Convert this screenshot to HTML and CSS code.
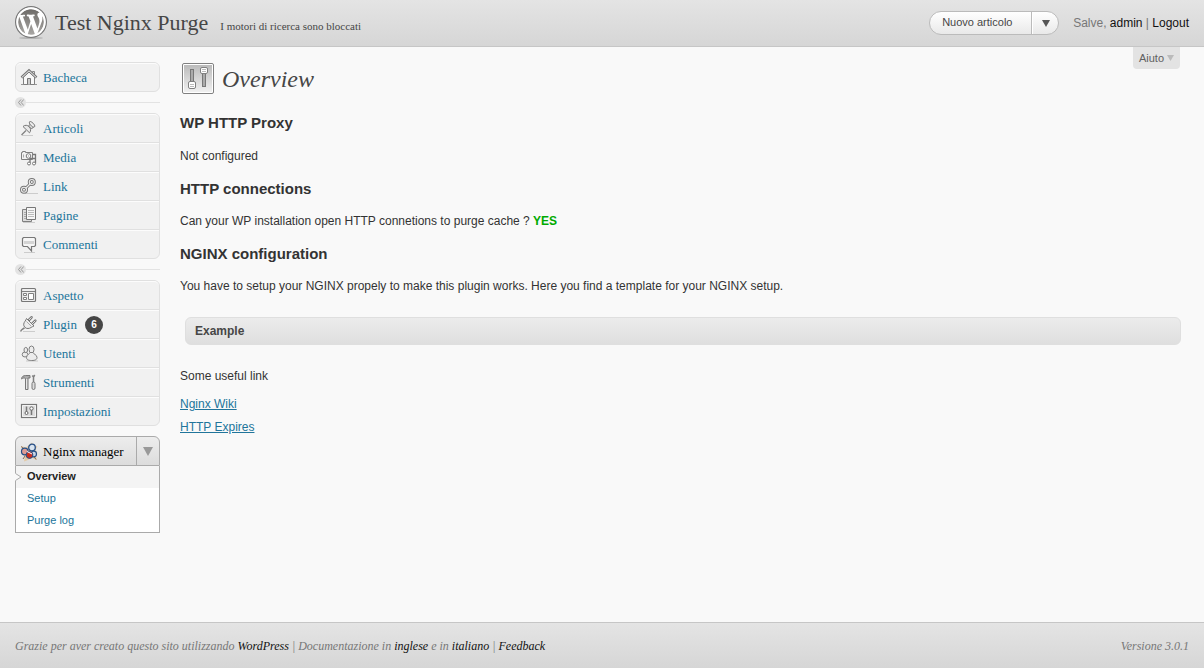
FILE: index.html
```html
<!DOCTYPE html>
<html lang="it">
<head>
<meta charset="utf-8">
<meta name="viewport" content="width=device-width, initial-scale=1">
<title>Overview ‹ Test Nginx Purge — WordPress</title>
<link rel="stylesheet" href="styles.css">
</head>
<body>
<header class="topbar">
  <svg class="logo" viewBox="0 0 32 34" aria-hidden="true">
    <defs><linearGradient id="disc" x1="0" y1="0" x2="0" y2="1"><stop offset="0" stop-color="#6e6b68"/><stop offset="1" stop-color="#a9a7a4"/></linearGradient></defs>
    <ellipse cx="16" cy="32" rx="12" ry="1" fill="#b4b4b4"/>
    <circle cx="16" cy="16" r="15.4" fill="#fff" stroke="#777" stroke-width="1.2"/>
    <circle cx="16" cy="16" r="13" fill="url(#disc)"/>
    <path transform="translate(1.6 1.6) scale(1.44)" fill="#fff" d="M20 10c0-5.51-4.49-10-10-10C4.48 0 0 4.49 0 10c0 5.52 4.48 10 10 10 5.51 0 10-4.48 10-10zM7.78 15.37L4.37 6.22c.55-.02 1.17-.08 1.17-.08.5-.06.44-1.13-.06-1.11 0 0-1.45.11-2.37.11-.18 0-.37 0-.58-.01C4.12 2.69 6.87 1.11 10 1.11c2.33 0 4.45.87 6.05 2.34-.68-.11-1.65.39-1.65 1.58 0 .74.45 1.36.9 2.1.35.61.55 1.36.55 2.46 0 1.49-1.4 5-1.4 5l-3.03-8.37c.54-.02.82-.17.82-.17.5-.05.44-1.25-.06-1.22 0 0-1.44.12-2.38.12-.87 0-2.33-.12-2.33-.12-.5-.03-.56 1.2-.06 1.22l.92.08 1.26 3.41zM17.41 10c.24-.64.74-1.87.43-4.25.7 1.29 1.05 2.71 1.05 4.25 0 3.29-1.73 6.24-4.4 7.78.97-2.59 1.94-5.2 2.92-7.78zM6.1 18.09C3.12 16.65 1.11 13.53 1.11 10c0-1.3.23-2.48.72-3.59C3.25 10.3 4.67 14.2 6.1 18.09zm4.03-6.63l2.58 6.98c-.86.29-1.76.45-2.71.45-.79 0-1.57-.11-2.29-.33.81-2.38 1.62-4.74 2.42-7.1z"/>
  </svg>
  <div class="site">
    <h1 class="site-title"><a href="#">Test Nginx Purge</a></h1>
    <a class="privacy" href="#">I motori di ricerca sono bloccati</a>
  </div>
  <div class="favorite">
    <a class="favorite-link" href="#">Nuovo articolo</a>
    <button class="favorite-toggle" type="button" aria-label="Altre azioni"><svg width="8" height="7" viewBox="0 0 8 7"><path d="M0 0h8L4 7z" fill="#555"/></svg></button>
  </div>
  <p class="user">Salve, <a href="#">admin</a> | <a href="#">Logout</a></p>
</header>

<div class="page">
  <nav class="sidebar" aria-label="Menu">
    <ul class="menu">
      <li><a href="#"><svg class="icon" viewBox="0 0 18 18"><path d="M1 15.500h16" stroke="#999"/><path d="M12.500 6V2.500h2V8" fill="#eee" stroke="#888"/><path d="M3.500 8v7.500h11V8L9 3z" fill="#f8f8f8" stroke="#808080"/><path d="M1.500 8.500 9 1.500l7.500 7" fill="none" stroke="#777" stroke-width="2.600"/><path d="M2 8.300 9 1.800l7 6.500" fill="none" stroke="#f4f4f4" stroke-width="1"/><path d="M7.500 15.500V9.500h3v6" fill="#ccc" stroke="#777"/></svg>Bacheca</a></li>
    </ul>
    <div class="separator"><button type="button" aria-label="Comprimi menu"><svg width="6" height="7" viewBox="0 0 6 7"><path d="M3 .5l-2.500 3 2.500 3M5.700.5l-2.500 3 2.500 3" fill="none" stroke="#999"/></svg></button></div>
    <ul class="menu">
      <li><a href="#"><svg class="icon" viewBox="0 0 18 18"><path d="M2 15.500h11" stroke="#ccc"/><path d="M6 10.500 1.500 15" stroke="#808080" stroke-width="1.300"/><path d="M8.500 6 11.500 3l3 3L11.500 9z" fill="#ddd" stroke="#777"/><path d="M9.500 1.800c1-1.600 6.600 3.500 5 5-1 .7-2.200.1-3.200-1S8.800 3.300 9.500 1.800z" fill="#eee" stroke="#777"/><path d="M3 6.500c2-1.800 4.500-1.500 6.200.3s2 4 .3 6z" fill="#e8e8e8" stroke="#777"/></svg>Articoli</a></li>
      <li><a href="#"><svg class="icon" viewBox="0 0 18 18"><path d="M1.500 3.500h1v-1h3v1h7v7h-11z" fill="#f2f2f2" stroke="#808080"/><circle cx="8.500" cy="7" r="2.300" fill="#fff" stroke="#777"/><circle cx="8.500" cy="7" r=".8" fill="#aaa"/><path d="M3.500 5.500v3" stroke="#aaa"/><path d="M10 14V9.500h5.500v5M13 5.500h2.500v4" fill="none" stroke="#777" stroke-width="1.300"/><circle cx="9" cy="14.500" r="1.500" fill="#fff" stroke="#777"/><circle cx="14" cy="14.500" r="1.500" fill="#fff" stroke="#777"/></svg>Media</a></li>
      <li><a href="#"><svg class="icon" viewBox="0 0 18 18"><path d="M5 15.500h13" stroke="#ccc"/><g fill="none" stroke="#777" stroke-width="3"><circle cx="11.800" cy="4" r="2.500"/><circle cx="4" cy="11.800" r="2.500"/><path d="M5.500 10.500l5-5"/></g><g fill="none" stroke="#ececec" stroke-width="1.100"><circle cx="11.800" cy="4" r="2.500"/><circle cx="4" cy="11.800" r="2.500"/><path d="M5.500 10.500l5-5"/></g></svg>Link</a></li>
      <li><a href="#"><svg class="icon" viewBox="0 0 18 18"><path d="M3 15.500h12" stroke="#ccc"/><path d="M2.500 2.500h9v12h-9z" fill="#ddd" stroke="#808080"/><path d="M4 5.500h2M4 7.500h2M4 9.500h2M4 11.500h2" stroke="#aaa"/><path d="M6.500.5h9v12h-9z" fill="#f6f6f6" stroke="#777"/><path d="M8 3.500h6M8 5.500h6M8 7.500h6M8 9.500h6" stroke="#bbb"/></svg>Pagine</a></li>
      <li><a href="#"><svg class="icon" viewBox="0 0 18 18"><path d="M4 16.500h11" stroke="#ccc"/><path d="M3.500 1.500h11l1 1v7l-1 1H11.500v4.500L7.500 10.500h-4l-1-1v-7z" fill="#f6f6f6" stroke="#777" stroke-width="1.200"/><path d="M4 5h10v3H4z" fill="#d4d4d4"/></svg>Commenti</a></li>
    </ul>
    <div class="separator"><button type="button" aria-label="Comprimi menu"><svg width="6" height="7" viewBox="0 0 6 7"><path d="M3 .5l-2.500 3 2.500 3M5.700.5l-2.500 3 2.500 3" fill="none" stroke="#999"/></svg></button></div>
    <ul class="menu">
      <li><a href="#"><svg class="icon" viewBox="0 0 18 18"><rect x="1.500" y="1.500" width="14" height="13" rx="1" fill="#eee" stroke="#777" stroke-width="1.200"/><path d="M2 4.500h13" stroke="#808080"/><path d="M3.500 6.500h3v2h-3zM3.500 10.500h3v2h-3zM8.500 6.500h5v6h-5z" fill="#fff" stroke="#808080"/></svg>Aspetto</a></li>
      <li><a href="#"><svg class="icon" viewBox="0 0 18 18"><path d="M3 15.500h12" stroke="#ccc"/><path d="M.8 15.500c0-2 2-2 3.700-3.700" fill="none" stroke="#808080" stroke-width="1.600"/><path d="M8.500 4.500 11.500 1.300M12 8l3.300-3.300" stroke="#777" stroke-width="2.600" stroke-linecap="round"/><path d="M8.500 4.500 11.500 1.300M12 8l3.300-3.300" stroke="#f4f4f4" stroke-width=".9"/><path d="M6.500 2.500 14 10c-2 .5-3.500 2.500-6 2.500-2.500.2-4.500-2-4.300-4.300C3.900 6 6 4.500 6.500 2.500z" fill="#ececec" stroke="#777"/><path d="M6.500 5.500l4.800 4.800" stroke="#aaa"/></svg>Plugin <span class="badge">6</span></a></li>
      <li><a href="#"><svg class="icon" viewBox="0 0 18 18"><path d="M6 16h12" stroke="#ccc"/><g fill="#ececec" stroke="#808080"><ellipse cx="5" cy="9.500" rx="2.800" ry="2.500"/><ellipse cx="5.800" cy="5" rx="1.800" ry="2.600"/><ellipse cx="11.500" cy="4.500" rx="2.500" ry="3.500"/><path d="M10 7.500h3c0 1.500 4 2 4 5 0 2-1.500 3-5.300 3S6.500 14.500 6.500 12.500c0-3 3.500-3.500 3.500-5z"/></g></svg>Utenti</a></li>
      <li><a href="#"><svg class="icon" viewBox="0 0 18 18"><path d="M1.500 4.500c.5-2 2-3 4-3h4.500V4H8v11.500H5.500V4.500c-1.500-.8-2.500-.5-4 .5z" fill="#aaa" stroke="#777"/><path d="M6.700 5v10" stroke="#f4f4f4"/><path d="M13.500 9V3l-1.200-1.500M13.500 3l1.200-2" fill="none" stroke="#808080" stroke-width="1.500"/><rect x="12" y="8" width="3" height="7.500" rx="1.500" fill="#ddd" stroke="#777"/></svg>Strumenti</a></li>
      <li><a href="#"><svg class="icon" viewBox="0 0 18 18"><rect x="1.500" y="1.500" width="15" height="13" fill="#fff" stroke="#777" stroke-width="1.200"/><path d="M3 3h12v10H3z" fill="#ddd"/><path d="M6.500 3.500V9M11.500 6v6" stroke="#777" stroke-width="1.500"/><circle cx="6.500" cy="10" r="1.500" fill="#fff" stroke="#666"/><circle cx="11.500" cy="5.500" r="1.700" fill="#fff" stroke="#666"/></svg>Impostazioni</a></li>
    </ul>
    <section class="current">
      <div class="current-head">
        <a href="#"><svg class="icon" viewBox="0 0 18 18"><path d="M12-.5l1.500 4 4-.5-2 4 2 3-2 2 1.500 5-5-2-4 2-4 1.500 1-5-3-3 2-3L1 3l5 1.500z" fill="#e3c9a4"/><path d="M1 3.500l2 1.500M3 16l2-3M16 16.500l-2-3" stroke="#8a6a50"/><circle cx="12" cy="4.500" r="3.300" fill="#d9e4f0" stroke="#274f86" stroke-width="1.300"/><circle cx="4.800" cy="8.500" r="3.300" fill="#dd9c94" stroke="#274f86" stroke-width="1.200"/><circle cx="13.700" cy="11" r="2.800" fill="#c8d4e4" stroke="#274f86" stroke-width="1.200"/><circle cx="9.500" cy="12" r="3.400" fill="#c92f20" stroke="#274f86"/><path d="M7 8.500l5 2.500" stroke="#fff"/></svg>Nginx manager</a>
        <button type="button" aria-label="Apri o chiudi il menu"><svg width="10" height="9" viewBox="0 0 10 9"><path d="M0 0h10L5 9z" fill="#999"/></svg></button>
      </div>
      <ul class="submenu">
        <li class="active"><svg class="pointer" width="7" height="8" viewBox="0 0 7 8"><path d="M0 0l6 4-6 4z" fill="#f9f9f9"/><path d="M.5.500 6 4 .5 7.500" fill="none" stroke="#aaa"/></svg><a href="#">Overview</a></li>
        <li><a href="#">Setup</a></li>
        <li><a href="#">Purge log</a></li>
      </ul>
    </section>
  </nav>

  <main class="content">
    <button class="help" type="button">Aiuto <svg width="7" height="6" viewBox="0 0 7 6"><path d="M0 0h7L3.500 6z" fill="#bbb"/></svg></button>
    <div class="heading">
      <svg width="32" height="31" viewBox="0 0 32 31" aria-hidden="true">
        <defs><linearGradient id="panel" x1="0" y1="0" x2="0" y2="1"><stop offset="0" stop-color="#bbb"/><stop offset="1" stop-color="#f0f0f0"/></linearGradient></defs>
        <rect x=".5" y=".5" width="31" height="30" rx="1.500" fill="#fff" stroke="#808080"/>
        <rect x="2" y="2" width="28" height="27" fill="url(#panel)"/>
        <rect x="8.500" y="6.500" width="3" height="13" fill="#aaa" stroke="#777"/>
        <rect x="20.500" y="9.500" width="3" height="14" fill="#aaa" stroke="#777"/>
        <rect x="6.500" y="18.500" width="7" height="7" rx="1.500" fill="#fff" stroke="#808080"/>
        <rect x="18.500" y="4.500" width="7" height="6" rx="1.500" fill="#fff" stroke="#808080"/>
        <path d="M8 21.500h4M8 23.500h4M20 6.500h4M20 8.500h4" stroke="#bbb"/>
      </svg>
      <h2>Overview</h2>
    </div>
    <h3>WP HTTP Proxy</h3>
    <p>Not configured</p>
    <h3>HTTP connections</h3>
    <p>Can your WP installation open HTTP connetions to purge cache ? <strong class="yes">YES</strong></p>
    <h3>NGINX configuration</h3>
    <p>You have to setup your NGINX propely to make this plugin works. Here you find a template for your NGINX setup.</p>
    <h4 class="box">Example</h4>
    <p>Some useful link</p>
    <ul class="links">
      <li><a href="#">Nginx Wiki</a></li>
      <li><a href="#">HTTP Expires</a></li>
    </ul>
  </main>
</div>

<footer class="footer">
  <p>Grazie per aver creato questo sito utilizzando <a href="#">WordPress</a> | Documentazione in <a href="#">inglese</a> e in <a href="#">italiano</a> | <a href="#">Feedback</a></p>
  <p>Versione 3.0.1</p>
</footer>
</body>
</html>
```

FILE: styles.css
```css
* {
  box-sizing: border-box;
}

body {
  margin: 0;
  min-height: 100vh;
  display: flex;
  flex-direction: column;
  background: #f9f9f9;
  color: #333;
  font: 12px/18px "Liberation Sans", Arial, sans-serif;
}

h1, h2, h3, h4, p, ul {
  margin: 0;
  padding: 0;
}

ul {
  list-style: none;
}

a {
  color: #21759b;
  text-decoration: none;
}

button {
  margin: 0;
  padding: 0;
  border: 0;
  background: none;
  font: inherit;
  color: inherit;
  cursor: pointer;
}

svg {
  display: block;
  flex: none;
}

/* Top bar */
.topbar {
  display: flex;
  align-items: center;
  min-height: 47px;
  padding: 0 15px;
  border-bottom: 1px solid #c6c6c6;
  background: linear-gradient(#e4e4e4, #d6d6d6);
}

.logo {
  width: 32px;
  height: 34px;
}

.site {
  display: flex;
  align-items: baseline;
  gap: 12px;
  margin-left: 8px;
  margin-right: auto;
  font-family: "Liberation Serif", "Times New Roman", serif;
}

.site a {
  color: #464646;
}

.site-title {
  font-size: 22px;
  line-height: 28px;
  font-weight: normal;
}

.privacy {
  font-size: 11px;
}

.favorite {
  display: flex;
  width: 130px;
  height: 24px;
  border: 1px solid #bbb;
  border-radius: 12px;
  background: linear-gradient(#fff, #e9e9e9);
  overflow: hidden;
}

.favorite-link {
  flex: 1;
  padding-left: 12px;
  border-right: 1px solid #bbb;
  color: #464646;
  font-size: 11px;
  line-height: 21px;
}

.favorite-toggle {
  display: grid;
  place-items: center;
  width: 26px;
  border-left: 1px solid #fff;
}

.user {
  margin-left: 14px;
  color: #777;
}

.user a {
  color: #111;
}

/* Page columns */
.page {
  flex: 1;
  display: flex;
  align-items: flex-start;
  gap: 20px;
  padding: 15px 18px 20px 15px;
}

.sidebar {
  flex: none;
  width: 145px;
}

.menu {
  border: 1px solid #e0e0e0;
  border-radius: 6px;
  background: #f1f1f1;
  font-family: "Liberation Serif", "Times New Roman", serif;
  font-size: 13px;
}

.menu li + li {
  border-top: 1px solid #e0e0e0;
}

.menu a {
  display: flex;
  align-items: center;
  gap: 5px;
  height: 28px;
  padding-left: 4px;
  border-top: 1px solid #fcfcfc;
}

.menu li:first-child a {
  border-radius: 5px 5px 0 0;
}

.icon {
  width: 18px;
  height: 18px;
  overflow: visible;
}

.badge {
  display: inline-block;
  min-width: 18px;
  height: 18px;
  margin-left: 3px;
  border-radius: 9px;
  background: #464646;
  color: #fff;
  font: bold 10px/17px "Liberation Sans", Arial, sans-serif;
  text-align: center;
}

.separator {
  display: flex;
  align-items: center;
  height: 21px;
}

.separator::after {
  content: "";
  flex: 1;
  border-top: 1px solid #e3e3e3;
}

.separator button {
  display: grid;
  place-items: center;
  width: 11px;
  height: 11px;
  border-radius: 6px;
  background: #e3e3e3;
}

.current {
  margin-top: 10px;
}

.current-head {
  display: flex;
  height: 30px;
  border: 1px solid #aaa;
  border-radius: 6px 6px 0 0;
  background: linear-gradient(#ededed, #dcdcdc);
}

.current-head a {
  flex: 1;
  display: flex;
  align-items: center;
  gap: 5px;
  padding: 2px 0 0 4px;
  color: #000;
  font-family: "Liberation Serif", "Times New Roman", serif;
  font-size: 13px;
  white-space: nowrap;
}

.current-head button {
  display: grid;
  place-items: center;
  width: 23px;
  border-left: 1px solid #aaa;
}

.submenu {
  border: solid #aaa;
  border-width: 0 1px 1px;
  background: #fff;
  font-size: 11px;
}

.submenu a {
  display: block;
  padding: 0 0 2px 11px;
  line-height: 20px;
}

.submenu .active {
  position: relative;
  background: #f4f4f4;
}

.submenu .active a {
  color: #222;
  font-weight: bold;
}

.pointer {
  position: absolute;
  left: -1px;
  top: 7px;
}

/* Content */
.content {
  position: relative;
  flex: 1;
  min-width: 0;
}

.help {
  position: absolute;
  top: -15px;
  right: 6px;
  display: flex;
  align-items: center;
  gap: 3px;
  height: 22px;
  padding: 0 6px;
  border-radius: 0 0 4px 4px;
  background: #e3e3e3;
  color: #606060;
  font-size: 11px;
}

.heading {
  display: flex;
  align-items: center;
  gap: 8px;
  height: 33px;
  margin: 0 0 18px 2px;
}

.heading h2 {
  color: #464646;
  font: italic 24px/32px "Liberation Serif", "Times New Roman", serif;
}

.content h3 {
  margin: 14px 0 13px;
  font-size: 15px;
  line-height: 20px;
}

.content h3:first-of-type {
  margin-bottom: 14px;
}

.content p {
  line-height: 18px;
}

.yes {
  color: #0a0;
}

.box {
  margin: 22px 5px;
  padding: 0 9px;
  border: 1px solid #dfdfdf;
  border-radius: 6px;
  background: linear-gradient(#ececec, #dfdfdf);
  color: #464646;
  font-size: 12px;
  line-height: 26px;
}

.links {
  margin-top: 8px;
  line-height: 23px;
}

.links a {
  text-decoration: underline;
}

/* Footer */
.footer {
  display: flex;
  justify-content: space-between;
  align-items: center;
  min-height: 46px;
  padding: 0 15px;
  border-top: 1px solid #c6c6c6;
  background: linear-gradient(#e4e4e4, #d6d6d6);
  color: #777;
  font: italic 12px/18px "Liberation Serif", "Times New Roman", serif;
}

.footer a {
  color: #111;
}
```
